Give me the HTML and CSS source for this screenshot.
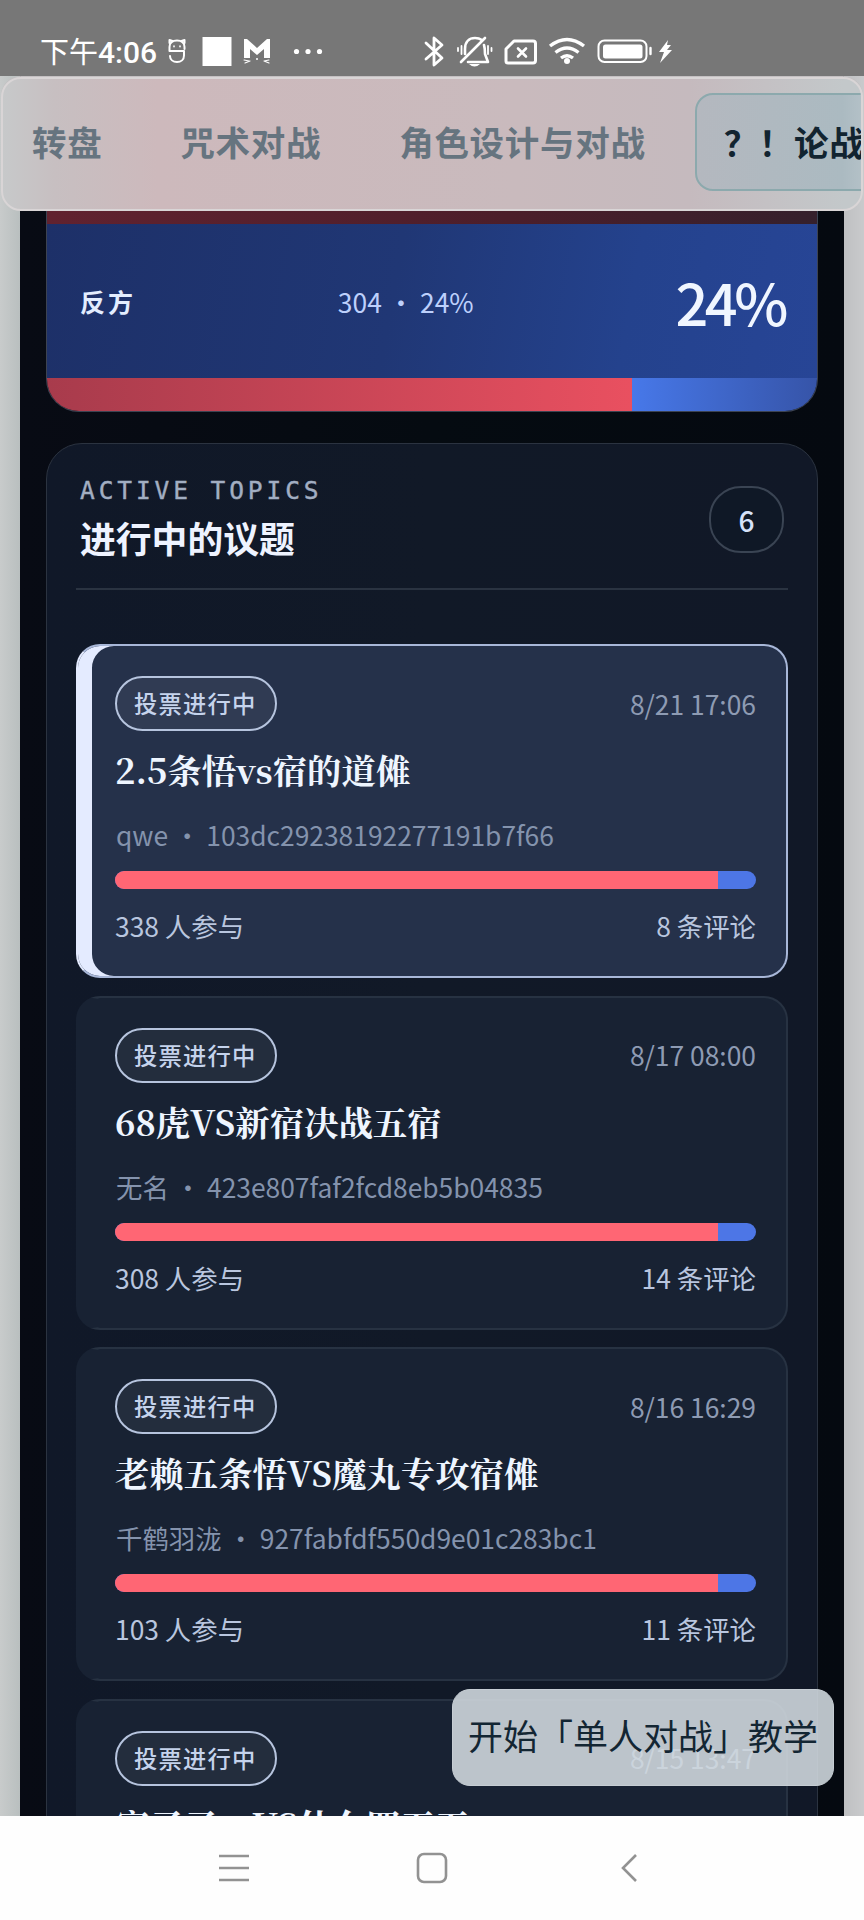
FILE: index.html
```html
<!DOCTYPE html>
<html lang="zh-CN">
<head>
<meta charset="utf-8">
<title>论战</title>
<link rel="stylesheet" href="styles.css">
</head>
<body>
<header class="status">
  <span class="clock">下午<b>4:06</b></span>
  <svg class="status-icons" width="864" height="76" viewBox="0 0 864 76" fill="none" stroke="#fff" stroke-width="2.2" stroke-linecap="round" stroke-linejoin="round">
    <path d="M184.500 49v-2c0-4-3-6.500-7.500-6.500s-7.500 2.500-7.500 6.500v4h14.500v4.500c0 4-3 6.500-7 6.500s-7-2.500-7-6" stroke-width="2"/>
    <path d="M169.500 43v-3l3 1M184.500 43v-3l-3 1" stroke-width="2"/>
    <path d="M174 46v.8M180 46v.8" stroke-width="1.600"/>
    <path d="M202.500 37h29v29h-29z" fill="#fff" stroke="none"/>
    <path d="M244 58V39l3 0 10 9 10-9 3 0v19h-6V49l-7 6-7-6v9z" fill="#fff" stroke="none"/>
    <path d="M244 60l5 1M245 63l5-2M269 60l-5 1M269 63l-5-2" stroke-width="1.200"/>
    <g fill="#fff" stroke="none"><circle cx="257" cy="59" r="1"/><circle cx="296.500" cy="51.500" r="2.600"/><circle cx="308" cy="51.500" r="2.600"/><circle cx="319.500" cy="51.500" r="2.600"/></g>
    <path d="M426 43l16 15-8 7V38l8 7-16 14" stroke-width="2.800"/>
    <path d="M465 54V49c0-7 4-11 10-11q4 0 7 2M484 45q1 3 1 9l3 8h-20M461 62l24-24" stroke-width="2.600"/>
    <path d="M458 48v3M461.500 46v8M491.500 48v3M488 46v8" stroke-width="1.800"/>
    <path d="M469 64h11q-5.500 5-11 0z" fill="#fff" stroke="none"/>
    <path d="M514 41h19q2.500 0 2.500 2.500v17q0 2.500-2.500 2.500h-25q-2 0-2-2V49z" stroke-width="3"/>
    <path d="M518 48.500l8 8M526 48.500l-8 8" stroke-width="2.600"/>
    <path d="M550 46q17-13 34 0M555.500 52.500q11.500-9 23 0M561 58q6-4.500 12 0" stroke-width="3.400" stroke-linecap="butt"/>
    <circle cx="567" cy="61" r="3" fill="#fff" stroke="none"/>
    <rect x="598.500" y="40.500" width="48" height="21.500" rx="6" stroke-width="2"/>
    <rect x="603" y="44.500" width="39.500" height="14" rx="2.500" fill="#fff" stroke="none"/>
    <path d="M650.500 48v6" stroke-width="2.400"/>
    <path d="M668 40l-9 12h5l-4 11 12-13h-5l4-5h-4z" fill="#fff" stroke="none"/>
  </svg>
</header>

<main class="viewport">
  <nav class="tabs">
    <a class="tab">转盘</a>
    <a class="tab">咒术对战</a>
    <a class="tab">角色设计与对战</a>
    <a class="tab active">？！论战</a>
  </nav>
  <div class="page">
    <section class="votes">
      <div class="side pro"></div>
      <div class="side con">
        <span class="side-name">反方</span>
        <span class="side-count">304 • 24%</span>
        <strong class="side-percent">24%</strong>
      </div>
      <div class="split"><i class="split-pro"></i><i class="split-con"></i></div>
    </section>

    <section class="topics">
      <header class="topics-head">
        <div>
          <p class="eyebrow">ACTIVE TOPICS</p>
          <h2>进行中的议题</h2>
        </div>
        <span class="count">6</span>
      </header>

      <article class="card selected">
        <div class="row"><span class="pill">投票进行中</span><time>8/21 17:06</time></div>
        <h3>2.5条悟vs宿的道傩</h3>
        <p class="author">qwe • 103dc29238192277191b7f66</p>
        <div class="meter"><i></i></div>
        <div class="row stats"><span>338 人参与</span><span>8 条评论</span></div>
      </article>
      <article class="card">
        <div class="row"><span class="pill">投票进行中</span><time>8/17 08:00</time></div>
        <h3>68虎VS新宿决战五宿</h3>
        <p class="author">无名 • 423e807faf2fcd8eb5b04835</p>
        <div class="meter"><i></i></div>
        <div class="row stats"><span>308 人参与</span><span>14 条评论</span></div>
      </article>
      <article class="card">
        <div class="row"><span class="pill">投票进行中</span><time>8/16 16:29</time></div>
        <h3>老赖五条悟VS魔丸专攻宿傩</h3>
        <p class="author">千鹤羽泷 • 927fabfdf550d9e01c283bc1</p>
        <div class="meter"><i></i></div>
        <div class="row stats"><span>103 人参与</span><span>11 条评论</span></div>
      </article>
      <article class="card">
        <div class="row"><span class="pill">投票进行中</span><time>8/15 13:47</time></div>
        <h3>宿子子一VS什么四五五</h3>
      </article>
    </section>
  </div>
  <button class="tutorial">开始「单人对战」教学</button>
</main>

<footer class="system-nav">
  <svg width="34" height="34" viewBox="0 0 34 34"><path d="M2 5h30M2 17h30M2 29h30"/></svg>
  <svg width="34" height="34" viewBox="0 0 34 34"><rect x="3" y="3" width="28" height="28" rx="6"/></svg>
  <svg width="34" height="34" viewBox="0 0 34 34"><path d="M23 4L10 17l13 13"/></svg>
</footer>
</body>
</html>
```
FILE: styles.css
```css
* { box-sizing: border-box; }
body {
  margin: 0;
  width: 864px;
  height: 1920px;
  overflow: hidden;
  font-family: "Noto Sans CJK SC", sans-serif;
  color: #edf3ff;
}
p, h2, h3 { margin: 0; }

.status { height: 76px; background: #777; position: relative; color: #fff; }
.clock {
  display: block;
  padding: 31px 0 0 40px;
  font-size: 29px;
  line-height: 38px;
  font-weight: 400;
  white-space: nowrap;
}
.clock b { font: 500 30px/38px Roboto, sans-serif; }
.status-icons { position: absolute; left: 0; top: 0; }

.viewport {
  position: relative;
  height: 1740px;
  overflow: hidden;
  background: linear-gradient(90deg, #c8cbcb 0, #b9bfbf 20px, #bfc0c2 844px, #c9cacc 100%);
}
.tabs {
  position: absolute;
  z-index: 2;
  inset: 1px 1px auto 1px;
  height: 134px;
  display: flex;
  align-items: center;
  gap: 20px;
  padding-left: 0;
  overflow: hidden;
  border: 2px solid #d9d5d6;
  border-radius: 20px;
  box-shadow: 0 -1px #c4c0c2;
  background: linear-gradient(90deg, #c7c9ca 0, #c7bfc1 6%, #cdb9bc 18%, #c9babd 60%, #c5babe 80%, #c3c8ca 98%);
}
.tab {
  flex: none;
  padding: 0 27px;
  border: 2px solid transparent;
  border-radius: 18px;
  height: 98px;
  line-height: 93px;
  margin-top: -5px;
  font-size: 34.500px;
  letter-spacing: .7px;
  font-weight: 700;
  color: #66747f;
}
.active {
  color: #122430;
  border-color: #8ca9ad;
  background: linear-gradient(90deg, #b4b8bf, #abbac1 75%, #c0cbd0);
}

.page {
  margin: 0 20px;
  height: 1740px;
  padding: 0 26px;
  background: linear-gradient(90deg, #080b14, #050b11 50%, #050910);
}
.votes {
  height: 336px;
  display: flex;
  flex-direction: column;
  overflow: hidden;
  border: 1px solid #3c4352;
  border-top: 0;
  border-radius: 0 0 33px 33px;
}
.pro { height: 148px; background: linear-gradient(90deg, #61222f, #4c1e2a 60%, #35202c); }
.con {
  height: 154px;
  display: flex;
  align-items: center;
  justify-content: space-between;
  padding: 0 32px 0 33px;
  background: linear-gradient(100deg, #1d3068, #203775 45%, #24428d 75%, #274596);
}
.side-name { font-size: 25px; font-weight: 700; letter-spacing: 3px; color: #e3edff; }
.side-count { font-size: 26.400px; color: #bdd0fc; }
.side-percent { font-size: 57.600px; line-height: 80px; font-weight: 500; letter-spacing: -3.400px; color: #f0f6ff; }
.split { flex: 1; display: flex; }
.split-pro { width: 76%; background: linear-gradient(90deg, #a83b4c, #e95060); }
.split-con { flex: 1; background: linear-gradient(90deg, #4778e9, #3654a8); }

.topics {
  margin-top: 31px;
  height: 1400px;
  padding: 0 29px;
  border: 1px solid #2b3340;
  border-radius: 36px 36px 0 0;
  background: linear-gradient(90deg, #101828, #111927 50%, #111827);
}
.topics-head {
  height: 146px;
  margin-bottom: 54px;
  padding: 30px 4px 0 4px;
  display: flex;
  justify-content: space-between;
  border-bottom: 2px solid #2a3341;
}
.eyebrow {
  font: 24.500px/33px "DejaVu Sans Mono", monospace;
  letter-spacing: 3.900px;
  color: #a2aec2;
  -webkit-text-stroke: .4px #a2aec2;
}
h2 { font-size: 35.800px; line-height: 60px; font-weight: 700; color: #eef3ff; }
.count {
  width: 75px;
  height: 67px;
  margin-top: 12px;
  border: 2px solid #3a4453;
  border-radius: 32px;
  background: #0f1826;
  font-size: 28px;
  line-height: 65px;
  font-weight: 500;
  text-align: center;
  color: #d6e2f9;
}

.card {
  height: 334px;
  margin-bottom: 17.600px;
  padding: 30px 30px 0 23px;
  border: 2px solid #273242;
  border-left: 16px solid transparent;
  border-radius: 24px;
  background: #182233;
  background-clip: border-box;
}
.selected {
  padding-left: 37px;
  border: 2px solid #a8b7d8;
  background: #25314a;
  box-shadow: inset 14px 0 #e4ebff;
  border-left-color: #e4ebff;
}
.row { display: flex; justify-content: space-between; align-items: center; }
.pill {
  width: 162px;
  height: 55px;
  border: 2px solid #b6c4de;
  border-radius: 28px;
  background: rgb(255 255 255 / 5%);
  font-size: 23.300px;
  line-height: 50px;
  letter-spacing: 1.200px;
  padding-left: 17px;
  font-weight: 500;
  color: #c5d3ec;
}
time { margin-top: -1px; font-size: 26.400px; color: #8e9bb3; }
h3 {
  margin-top: 13px;
  font: 700 34.400px/50px "Noto Serif CJK SC", "Liberation Serif", "Noto Sans CJK SC", serif;
  white-space: nowrap;
  color: #eef5ff;
}
.author {
  margin-top: 21px;
  padding-left: 1px;
  font-size: 26.400px;
  line-height: 40px;
  color: #8493ad;
}
.meter { height: 18px; margin-top: 16px; border-radius: 9px; overflow: hidden; background: #4d76e6; }
.meter i { display: block; width: 94%; height: 100%; background: #ff6674; }
.stats { margin-top: 17px; font-size: 26.400px; line-height: 40px; color: #b9c6df; }

.tutorial {
  position: absolute;
  right: 30px;
  bottom: 30px;
  width: 382px;
  height: 97px;
  padding: 0 0 6px;
  border: 1px solid #c6cdd3;
  border-radius: 18px;
  background: rgb(212 220 226 / 87%);
  font: 400 35px/90px "Noto Sans CJK SC", sans-serif;
  color: #132633;
  white-space: nowrap;
}

.system-nav {
  height: 104px;
  background: #fefefe;
  display: flex;
  justify-content: center;
  gap: 164px;
  padding-top: 35px;
}
.system-nav svg { fill: none; stroke: #929292; stroke-width: 2.600; }
```
